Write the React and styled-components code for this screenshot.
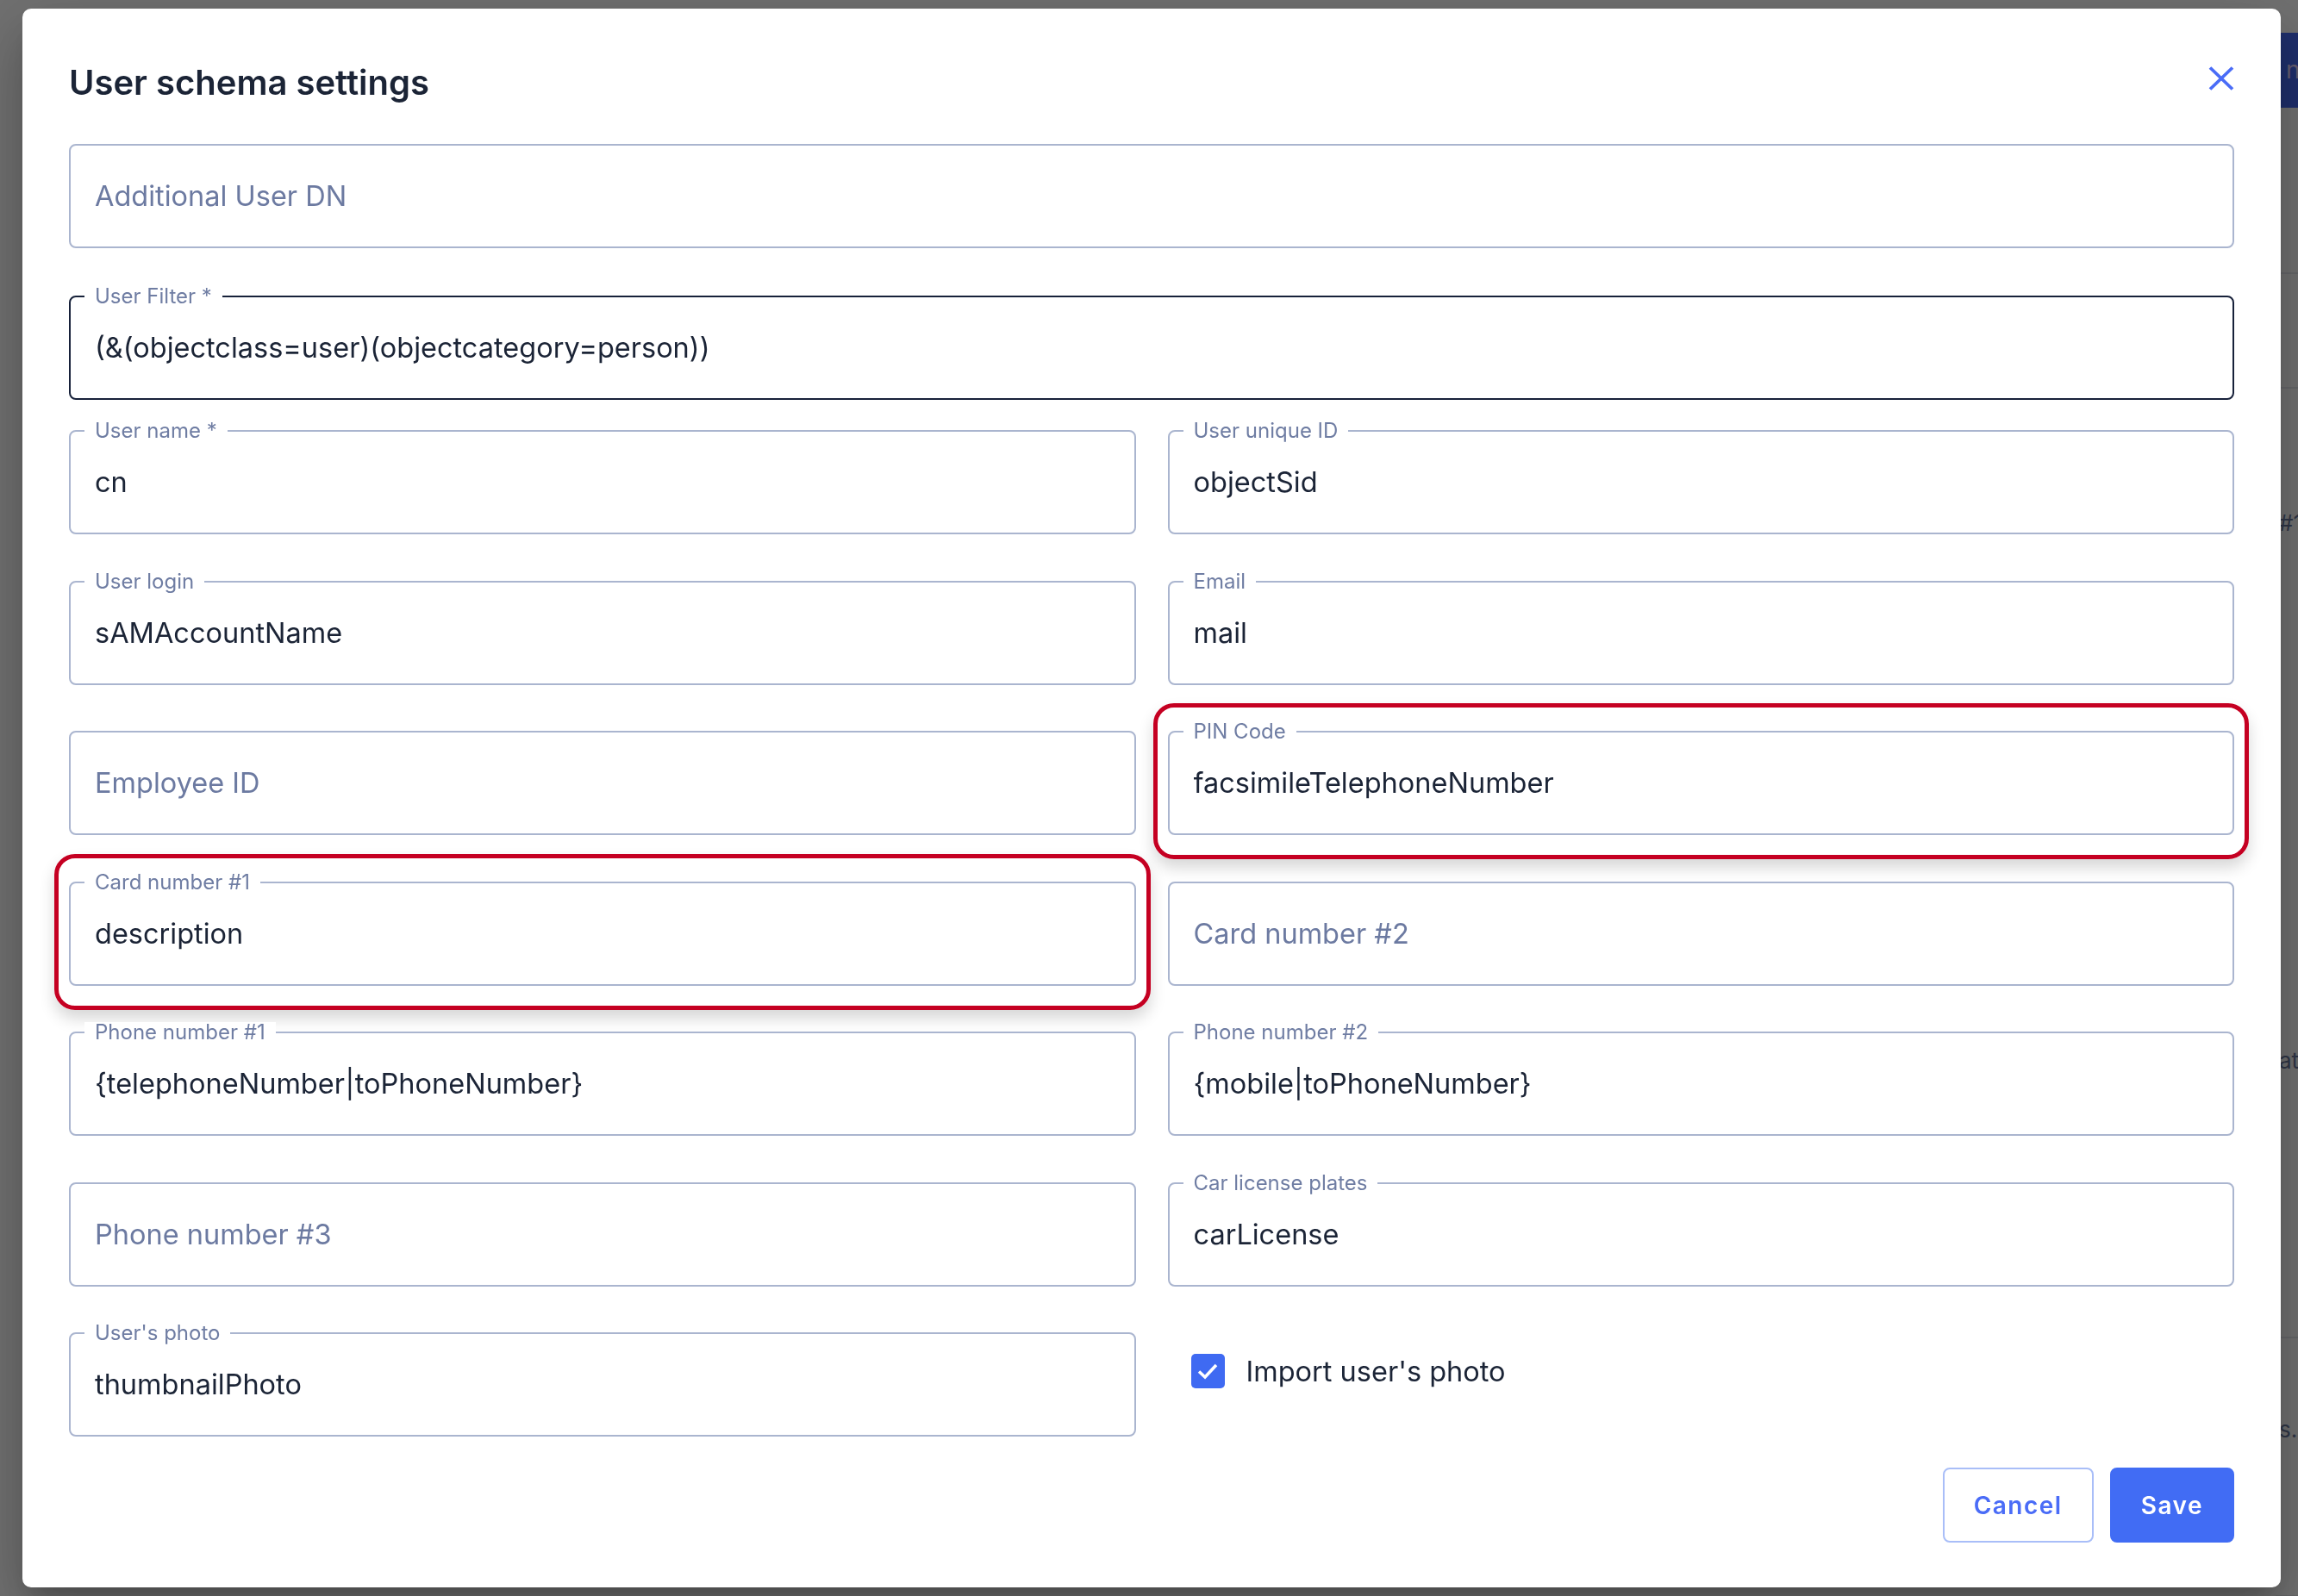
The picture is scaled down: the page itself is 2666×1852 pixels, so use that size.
import React from 'react';
import styled, { createGlobalStyle } from 'styled-components';

const GlobalStyle = createGlobalStyle`
  html, body {
    margin: 0;
    padding: 0;
  }
  body {
    font-family: Inter, Roboto, "Noto Sans", "Liberation Sans", sans-serif;
    background: #ffffff;
    overflow: hidden;
  }
  * {
    box-sizing: border-box;
  }
`;

/* page that sits under the dialog, only a sliver of it shows */
const Page = styled.div`
  width: 100vw;
  height: 100vh;
  overflow: hidden;
  background: #ffffff;
  display: grid;
  grid-template-columns: 2640px 1fr;
`;

const Rail = styled.div`
  display: flex;
  flex-direction: column;
  padding-top: 38px;
`;

const RailButton = styled.div`
  height: 87px;
  background: #4469f5;
  color: #e5d2ff;
  font-size: 28px;
  line-height: 87px;
  padding-left: 12px;
`;

const RailRow = styled.div`
  height: ${(p) => p.$h}px;
  border-bottom: 2px solid ${(p) => (p.$noLine ? 'transparent' : '#e6e8ee')};
  font-size: 26px;
  color: #6b7aa1;
  padding-top: ${(p) => p.$pad || 0}px;
  padding-left: 4px;
  white-space: nowrap;
`;

const Backdrop = styled.div`
  position: fixed;
  inset: 0;
  background: rgba(0, 0, 0, 0.56);
`;

const Dialog = styled.div`
  position: fixed;
  left: 26px;
  top: 10px;
  width: 2620px;
  height: 1832px;
  background: #ffffff;
  border-radius: 10px;
  padding: 64px 54px 52px;
  display: flex;
  flex-direction: column;
  box-shadow: 0 19px 26px -12px rgba(0, 0, 0, 0.2),
    0 41px 65px 5px rgba(0, 0, 0, 0.14), 0 15px 78px 14px rgba(0, 0, 0, 0.12);
`;

const Header = styled.div`
  display: flex;
  justify-content: space-between;
  align-items: flex-start;
`;

const Title = styled.h2`
  margin: 0;
  font-size: 40px;
  line-height: 43px;
  font-weight: 600;
  color: #1b2436;
`;

const CloseButton = styled.button`
  margin: 3px 0 0;
  padding: 0;
  border: none;
  background: none;
  width: 30px;
  height: 28px;
  color: #4a6cf7;
  cursor: pointer;
  display: flex;
`;

const Form = styled.div`
  display: flex;
  flex-direction: column;
  margin-top: 50px;
`;

const FullRow = styled.div`
  margin-top: ${(p) => p.$offset || 0}px;
`;

const Grid = styled.div`
  display: grid;
  grid-template-columns: 1fr 1fr;
  column-gap: 37px;
  row-gap: 53.5px;
  margin-top: 35px;
`;

const FieldBox = styled.div`
  position: relative;
  height: 121px;
  border: 2px solid ${(p) => (p.$focused ? '#17213a' : '#aab5cf')};
  border-radius: 8px;
  display: flex;
  align-items: center;
  padding: 0 28px;
`;

const Label = styled.span`
  position: absolute;
  left: 16px;
  top: -13px;
  padding: 0 12px;
  background: #ffffff;
  font-size: 24px;
  line-height: 24px;
  color: #6f7da3;
  white-space: nowrap;
`;

const Input = styled.input`
  width: 100%;
  border: none;
  outline: none;
  background: transparent;
  padding: 0;
  font-family: inherit;
  font-size: 32.5px;
  color: #1b2436;
  &::placeholder {
    color: #6c7aa1;
    opacity: 1;
  }
`;

const Highlight = styled.span`
  position: absolute;
  top: -34px;
  bottom: -30px;
  left: -19px;
  right: -19px;
  border: 5px solid #c50022;
  border-radius: 24px;
  box-shadow: 0 10px 18px rgba(0, 0, 0, 0.16);
  pointer-events: none;
`;

const CheckRow = styled.label`
  display: flex;
  align-items: center;
  gap: 25px;
  padding: 25px 0 0 27px;
  align-self: start;
  font-size: 32.5px;
  color: #1b2436;
  cursor: pointer;
`;

const CheckBox = styled.span`
  width: 39px;
  height: 40px;
  border-radius: 5px;
  background: #3f6af2;
  display: flex;
  align-items: center;
  justify-content: center;
`;

const Footer = styled.div`
  display: flex;
  justify-content: flex-end;
  gap: 19px;
  margin-top: 36px;
`;

const Button = styled.button`
  height: 87px;
  padding: 0 34px;
  border-radius: 8px;
  font-family: inherit;
  font-size: 28px;
  font-weight: 600;
  letter-spacing: 1.5px;
  cursor: pointer;
  border: 2px solid ${(p) => (p.$primary ? '#416cf4' : '#a9bef8')};
  background: ${(p) => (p.$primary ? '#416cf4' : '#ffffff')};
  color: ${(p) => (p.$primary ? '#ffffff' : '#4a6cf7')};
`;

function Field({ label, value, placeholder, focused, highlighted }) {
  return (
    <FieldBox $focused={focused}>
      {label && <Label>{label}</Label>}
      <Input readOnly value={value || ''} placeholder={placeholder} />
      {highlighted && <Highlight />}
    </FieldBox>
  );
}

export default function App() {
  return (
    <>
      <GlobalStyle />
      <Page>
        <div />
        <Rail>
          <RailButton>n</RailButton>
          <RailRow $h={193} />
          <RailRow $h={133} />
          <RailRow $h={449} $pad={140} $noLine>
            #1
          </RailRow>
          <RailRow $h={653} $pad={315}>
            at
          </RailRow>
          <RailRow $h={300} $pad={90}>
            s.
          </RailRow>
        </Rail>
      </Page>
      <Backdrop />
      <Dialog>
        <Header>
          <Title>User schema settings</Title>
          <CloseButton aria-label="Close">
            <svg width="30" height="28" viewBox="0 0 30 28">
              <path
                d="M2 1.5 L28 26.5 M28 1.5 L2 26.5"
                stroke="currentColor"
                strokeWidth="3.8"
                fill="none"
              />
            </svg>
          </CloseButton>
        </Header>
        <Form>
          <FullRow>
            <Field placeholder="Additional User DN" />
          </FullRow>
          <FullRow $offset={55}>
            <Field
              label="User Filter *"
              value="(&(objectclass=user)(objectcategory=person))"
              focused
            />
          </FullRow>
          <Grid>
            <Field label="User name *" value="cn" />
            <Field label="User unique ID" value="objectSid" />
            <Field label="User login" value="sAMAccountName" />
            <Field label="Email" value="mail" />
            <Field placeholder="Employee ID" />
            <Field label="PIN Code" value="facsimileTelephoneNumber" highlighted />
            <Field label="Card number #1" value="description" highlighted />
            <Field placeholder="Card number #2" />
            <Field label="Phone number #1" value="{telephoneNumber|toPhoneNumber}" />
            <Field label="Phone number #2" value="{mobile|toPhoneNumber}" />
            <Field placeholder="Phone number #3" />
            <Field label="Car license plates" value="carLicense" />
            <Field label="User's photo" value="thumbnailPhoto" />
            <CheckRow>
              <CheckBox>
                <svg width="26" height="22" viewBox="0 0 26 22">
                  <path
                    d="M3 11.5 L10 18 L23 4"
                    stroke="#ffffff"
                    strokeWidth="3.6"
                    fill="none"
                  />
                </svg>
              </CheckBox>
              Import user's photo
            </CheckRow>
          </Grid>
        </Form>
        <Footer>
          <Button>Cancel</Button>
          <Button $primary>Save</Button>
        </Footer>
      </Dialog>
    </>
  );
}
